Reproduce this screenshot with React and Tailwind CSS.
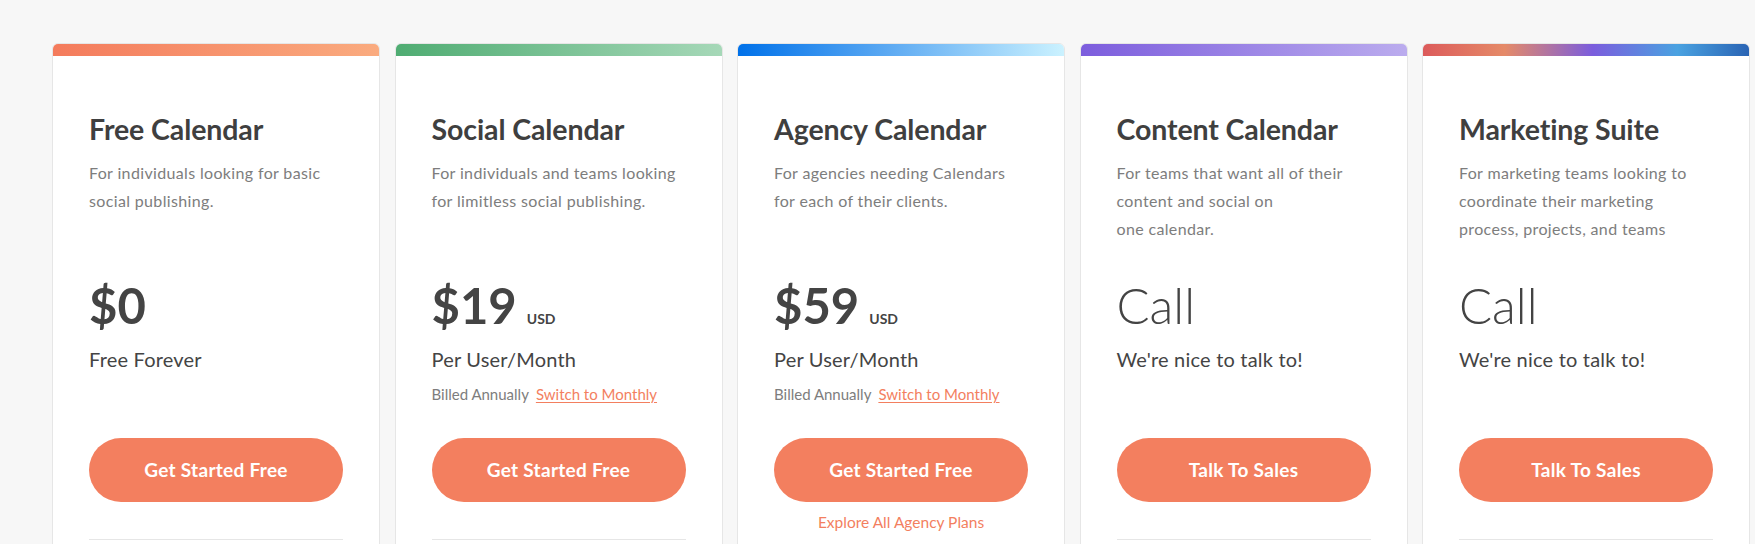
import React from 'react';

const plans = [
  {
    title: 'Free Calendar',
    bar: 'bg-[linear-gradient(90deg,#f47b5c_0%,#faab7f_100%)]',
    desc: ['For individuals looking for basic', 'social publishing.'],
    price: '$0',
    sub: 'Free Forever',
    cta: 'Get Started Free',
  },
  {
    title: 'Social Calendar',
    bar: 'bg-[linear-gradient(90deg,#4fac72_0%,#a6d8b8_100%)]',
    desc: ['For individuals and teams looking', 'for limitless social publishing.'],
    price: '$19',
    usd: true,
    sub: 'Per User/Month',
    billed: true,
    cta: 'Get Started Free',
  },
  {
    title: 'Agency Calendar',
    bar: 'bg-[linear-gradient(90deg,#0071e9_0%,#5aa8f2_45%,#cbf2ff_100%)]',
    desc: ['For agencies needing Calendars', 'for each of their clients.'],
    price: '$59',
    usd: true,
    sub: 'Per User/Month',
    billed: true,
    cta: 'Get Started Free',
    explore: true,
  },
  {
    title: 'Content Calendar',
    bar: 'bg-[linear-gradient(90deg,#7c5ddd_0%,#bbacee_100%)]',
    desc: ['For teams that want all of their', 'content and social on', 'one calendar.'],
    price: 'Call',
    call: true,
    sub: "We're nice to talk to!",
    cta: 'Talk To Sales',
  },
  {
    title: 'Marketing Suite',
    bar: 'bg-[linear-gradient(90deg,#dc5b5b_0%,#e58a68_25%,#7b5ddd_52%,#4aa2e1_78%,#2a64b4_100%)]',
    desc: ['For marketing teams looking to', 'coordinate their marketing', 'process, projects, and teams'],
    price: 'Call',
    call: true,
    sub: "We're nice to talk to!",
    cta: 'Talk To Sales',
  },
];

function PlanCard({ plan }) {
  return (
    <div className="flex-1 min-w-0 bg-white border border-[#e6e6e6] rounded-t-[6px] overflow-hidden">
      <div className={`h-[12px] ${plan.bar}`} />
      <div className="px-[36px] pt-[55px] pb-[40px]">
        <h3 className="text-[28.5px] leading-[36px] font-bold text-[#3f3f3f] tracking-[-0.1px]">{plan.title}</h3>

        <div className="mt-[12px] h-[86px] text-[16px] leading-[28px] tracking-[0.35px] text-[#7d7d7d]">
          {plan.desc.map(line => (
            <div key={line} className="whitespace-nowrap">{line}</div>
          ))}
        </div>

        <div className="mt-[36px] flex items-baseline h-[48px]">
          <span className={`text-[49px] leading-[48px] text-[#444] ${plan.call ? 'font-light' : 'font-bold'}`}>
            {plan.price}
          </span>
          {plan.usd && <span className="ml-[10px] text-[14px] font-bold text-[#444]">USD</span>}
        </div>

        <p className="mt-[18px] text-[20px] leading-[24px] tracking-[0.2px] text-[#444]">{plan.sub}</p>

        <div className="mt-[13px] h-[20px] text-[15px] leading-[20px] whitespace-nowrap">
          {plan.billed && (
            <>
              <span className="text-[#7d7d7d]">Billed Annually</span>
              <a href="#" className="ml-[7px] text-[#f37f5f] underline underline-offset-2">Switch to Monthly</a>
            </>
          )}
        </div>

        <button className="mt-[34px] w-full h-[64px] rounded-full bg-[#f37f5f] text-white text-[19px] font-bold tracking-[0.3px]">
          {plan.cta}
        </button>

        {plan.explore ? (
          <div className="mt-[10px] h-[20px] text-center text-[15.5px] leading-[20px] text-[#f37f5f]">
            Explore All Agency Plans
          </div>
        ) : null}

        <div className={`${plan.explore ? 'mt-[30px]' : 'mt-[37px]'} border-t border-[#e6e6e6]`} />
        <div className="h-[120px]" />
      </div>
    </div>
  );
}

export default function App() {
  return (
    <div className="min-h-screen bg-[#f7f7f7] font-['Lato',sans-serif]">
      <div className="flex gap-[14.5px] pl-[52px] pr-[5px] pt-[43px]">
        {plans.map(p => (
          <PlanCard key={p.title} plan={p} />
        ))}
      </div>
    </div>
  );
}
